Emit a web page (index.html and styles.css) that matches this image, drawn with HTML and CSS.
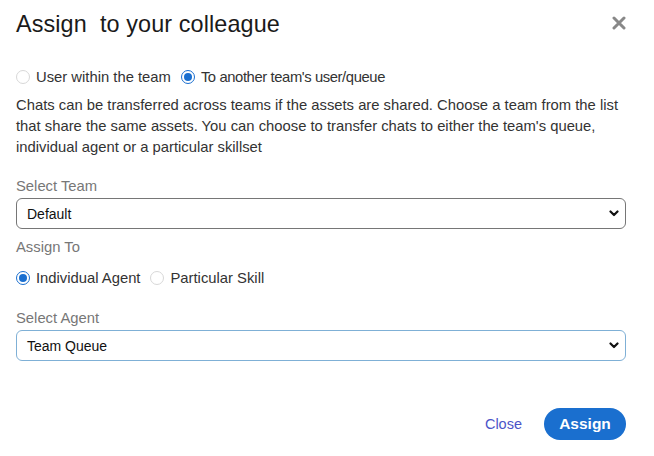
FILE: index.html
```html
<!DOCTYPE html>
<html>
<head>
<meta charset="utf-8">
<link rel="stylesheet" href="styles.css">
</head>
<body>
<div class="dialog">
  <div class="header">
    <h1 class="title">Assign&nbsp; to your colleague</h1>
    <svg class="close-x" width="14" height="14" viewBox="0 0 14 14"><path d="M2 2 L12 12 M12 2 L2 12" stroke="#888" stroke-width="3" stroke-linecap="round"/></svg>
  </div>
  <div class="radio-row top-radios">
    <label class="radio"><span class="dot"></span>User within the team</label>
    <label class="radio"><span class="dot on"></span><span class="tight">To another team's user/queue</span></label>
  </div>
  <p class="desc">Chats can be transferred across teams if the assets are shared. Choose a team from the list that share the same assets. You can choose to transfer chats to either the team's queue, individual agent or a particular skillset</p>
  <div class="field-label first">Select Team</div>
  <div class="select">
    <span>Default</span>
    <svg width="10" height="7" viewBox="0 0 10 7"><path d="M1.5 1.5 L5 5 L8.5 1.5" fill="none" stroke="#111" stroke-width="2.2" stroke-linecap="round" stroke-linejoin="round"/></svg>
  </div>
  <div class="field-label">Assign To</div>
  <div class="radio-row assign-radios">
    <label class="radio"><span class="dot on"></span>Individual Agent</label>
    <label class="radio"><span class="dot"></span>Particular Skill</label>
  </div>
  <div class="field-label agent">Select Agent</div>
  <div class="select focus">
    <span>Team Queue</span>
    <svg width="10" height="7" viewBox="0 0 10 7"><path d="M1.5 1.5 L5 5 L8.5 1.5" fill="none" stroke="#111" stroke-width="2.2" stroke-linecap="round" stroke-linejoin="round"/></svg>
  </div>
  <div class="footer">
    <button class="btn-link">Close</button>
    <button class="btn-primary">Assign</button>
  </div>
</div>
</body>
</html>
```
FILE: styles.css
```css
html, body {
  margin: 0;
  padding: 0;
  background: #fff;
}
body {
  font-family: "Liberation Sans", Arial, sans-serif;
  color: #333;
}
.dialog {
  width: 610px;
  padding: 0 28px 0 16px;
}
.header {
  display: flex;
  justify-content: space-between;
  align-items: center;
  height: 48px;
}
.title {
  margin: 0;
  font-weight: normal;
  font-size: 23.4px;
  color: #1a1a1a;
  letter-spacing: 0.1px;
}
.close-x {
  margin-right: 0;
  margin-top: -2px;
}
.radio-row {
  display: flex;
  align-items: center;
  font-size: 14.8px;
  color: #333;
}
.top-radios {
  margin-top: 20px;
  height: 18px;
}
.tight {
  letter-spacing: -0.4px;
}
.radio {
  display: flex;
  align-items: center;
  margin-right: 10px;
}
.dot {
  width: 12px;
  height: 12px;
  border: 1px solid #d8d8d8;
  border-radius: 50%;
  margin-right: 6px;
  box-sizing: content-box;
  position: relative;
}
.dot.on {
  border-color: #1a6fd0;
}
.dot.on::after {
  content: "";
  position: absolute;
  left: 2px;
  top: 2px;
  width: 8px;
  height: 8px;
  border-radius: 50%;
  background: #1a6fd0;
}
.desc {
  margin: 9px 0 0;
  font-size: 14.8px;
  line-height: 21px;
  color: #333;
}
.field-label {
  font-size: 14.8px;
  color: #777;
  margin-top: 8px;
  line-height: 20px;
}
.field-label.first {
  margin-top: 18px;
}
.select {
  margin-top: 2px;
  height: 31px;
  box-sizing: border-box;
  border: 1px solid #767676;
  border-radius: 6px;
  display: flex;
  align-items: center;
  justify-content: space-between;
  padding: 0 6px 0 10px;
  font-size: 14px;
  color: #111;
}
.select.focus {
  border-color: #7fb0d6;
}
.assign-radios {
  margin-top: 12px;
  height: 18px;
}
.field-label.agent {
  margin-top: 21px;
}
.footer {
  display: flex;
  justify-content: flex-end;
  align-items: center;
  margin-top: 47px;
  gap: 22px;
}
.btn-link {
  border: none;
  background: none;
  font-family: inherit;
  font-size: 14.5px;
  color: #4b54c8;
  padding: 0;
  cursor: pointer;
}
.btn-primary {
  border: none;
  background: #1a6fcf;
  color: #fff;
  font-family: inherit;
  font-size: 15.5px;
  font-weight: bold;
  height: 32px;
  width: 82px;
  border-radius: 16px;
  padding: 0;
  cursor: pointer;
}
```
